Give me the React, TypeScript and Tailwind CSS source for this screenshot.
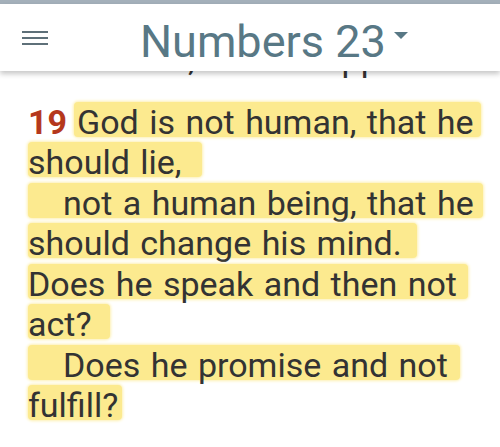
import React from "react";

type Line = { text: string; indent?: boolean; num?: string; tail: number };

// Verse 19 as laid out on screen, one entry per visual line
const verseLines: Line[] = [
  { num: "19", text: "God is not human, that he", tail: 8 },
  { text: "should lie,", tail: 20 },
  { text: "not a human being, that he", indent: true, tail: 9 },
  { text: "should change his mind.", tail: 15 },
  { text: "Does he speak and then not", tail: 11 },
  { text: "act?", tail: 19 },
  { text: "Does he promise and not", indent: true, tail: 12 },
  { text: "fulfill?", tail: 4 },
];

function HighlightedLine({ line }: { line: Line }) {
  return (
    <div className="h-[40.5px] whitespace-pre">
      {line.num && <span className="font-bold text-[#b5381c] mr-[10px]">{line.num}</span>}
      <span
        className="inline-block h-[35px] bg-[#fcea8f] rounded-[4px] shadow-[0_0_3px_1px_#fdf0b0]"
        style={{
          paddingRight: line.tail,
          paddingLeft: line.indent ? 35 : line.num ? 3 : 0,
          marginLeft: line.num ? -3 : 0,
        }}
      >
        {line.text}
      </span>
    </div>
  );
}

export default function App() {
  return (
    <div
      className="w-[500px] h-[447px] overflow-hidden bg-white flex flex-col"
      style={{ fontFamily: "Roboto, 'Noto Sans', sans-serif" }}
    >
      <div className="h-[4px] shrink-0 bg-[#a4b0ba]" />
      <header className="relative z-10 h-[67px] shrink-0 bg-white flex items-center shadow-[0_3px_5px_rgba(0,0,0,0.22)]">
        <div className="ml-[22px] w-[26px] flex flex-col gap-[4px]">
          <span className="h-[2px] bg-[#5e7079]" />
          <span className="h-[2px] bg-[#5e7079]" />
          <span className="h-[2px] bg-[#5e7079]" />
        </div>
        <div className="ml-[92px] flex items-center text-[45px] leading-none text-[#587885] pt-[7px]">
          <span>Numbers 23</span>
          <svg width="14" height="8" viewBox="0 0 14 8" className="ml-[8px] mb-[10px]">
            <path d="M0 0 L14 0 L7 7 Z" fill="#587885" />
          </svg>
        </div>
      </header>
      <main className="relative z-0 flex-1 text-[34px] leading-[40.5px] [word-spacing:2px] text-[#333333] pl-[28px]">
        {/* tail of verse 18, scrolled mostly under the app bar */}
        <div className="h-[9px] overflow-hidden">
          <div className="-mt-[32px] whitespace-pre pl-[35px]">hear me, son of Zippor.</div>
        </div>
        <div className="mt-[21.5px]">
          {verseLines.map((l, i) => (
            <HighlightedLine key={i} line={l} />
          ))}
        </div>
      </main>
    </div>
  );
}
